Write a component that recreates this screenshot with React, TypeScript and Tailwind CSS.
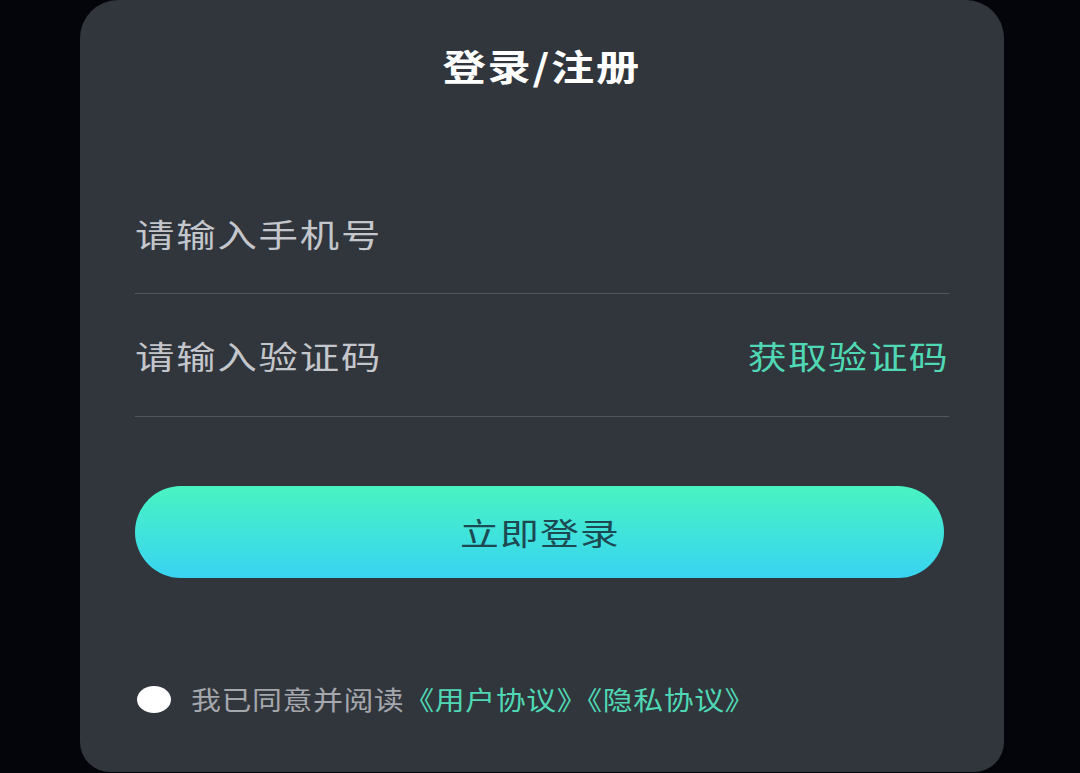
import React from "react";

const font = { fontFamily: '"Noto Sans CJK SC", "Noto Sans", sans-serif' };

export default function App() {
  return (
    <div className="h-[773px] w-[1080px] overflow-hidden bg-[#03050b] pl-[80px]" style={font}>
      <div className="flex h-[772px] w-[924px] flex-col rounded-t-[38px] rounded-b-[30px] bg-[#31353c] px-[55px]">
        <div className="flex justify-center pt-[44px]">
          <h1 className="inline-block origin-center scale-x-[1.2] text-[36px] font-bold leading-[42px] tracking-[1.5px] text-white">
            登录/注册
          </h1>
        </div>

        <div className="mt-[87px] flex h-[121px] items-center border-b border-[#53575d]">
          <span className="inline-block origin-left scale-x-[1.23] text-[32px] leading-[40px] tracking-[1.5px] text-[#c3c6cb]">
            请输入手机号
          </span>
        </div>
        <div className="flex h-[123px] items-center justify-between border-b border-[#53575d]">
          <span className="inline-block origin-left scale-x-[1.23] text-[32px] leading-[40px] tracking-[1.5px] text-[#c3c6cb]">
            请输入验证码
          </span>
          <span className="inline-block origin-right scale-x-[1.22] text-[32px] leading-[40px] tracking-[1px] text-[#4fd8b3]">
            获取验证码
          </span>
        </div>

        <button className="mt-[69px] flex h-[92px] w-[809px] items-center justify-center rounded-full bg-gradient-to-b from-[#4af3c0] to-[#39d3f1]">
          <span className="inline-block origin-center scale-x-[1.25] text-[31px] leading-[40px] tracking-[1px] text-[#1d4a52]">
            立即登录
          </span>
        </button>

        <div className="mt-[101px] flex h-[40px] items-center">
          <span className="ml-[2px] h-[27px] w-[34px] shrink-0 rounded-[50%] bg-white" />
          <span className="ml-[20px] inline-block origin-left scale-x-[1.15] whitespace-nowrap text-[26px] leading-[36px] tracking-[0.5px] text-[#a4a7ac]">
            我已同意并阅读<span className="text-[#4fd8b3]">《用户协议》《隐私协议》</span>
          </span>
        </div>
      </div>
    </div>
  );
}
